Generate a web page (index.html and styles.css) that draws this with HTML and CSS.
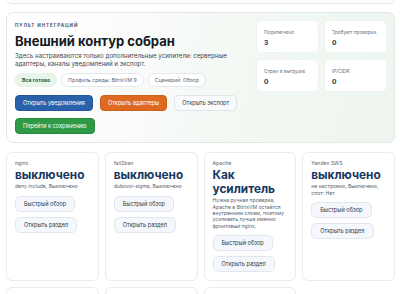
FILE: index.html
```html
<!DOCTYPE html>
<html lang="ru">
<head>
  <meta charset="UTF-8" />
  <meta name="viewport" content="width=device-width, initial-scale=1.0" />
  <title>Пульт интеграций</title>
  <link rel="stylesheet" href="styles.css">
</head>
<body>
  <div class="pagina">
    <div class="tarjeta-previa"></div>

    <section class="hero">
      <div class="hero-principal">
        <div class="eyebrow">Пульт интеграций</div>
        <h1>Внешний контур собран</h1>
        <p class="descripcion">Здесь настраиваются только дополнительные усилители: серверные адаптеры, каналы уведомлений и экспорт.</p>
        <div class="chips">
          <span class="chip chip-ok">Все готово</span>
          <span class="chip">Профиль среды: BitrixVM 9</span>
          <span class="chip">Сценарий: Обзор</span>
        </div>
        <div class="acciones">
          <button class="btn btn-azul">Открыть уведомления</button>
          <button class="btn btn-naranja">Открыть адаптеры</button>
          <button class="btn btn-claro">Открыть экспорт</button>
          <button class="btn btn-verde">Перейти к сохранению</button>
        </div>
      </div>
      <div class="stats">
        <div class="stat"><span>Подключено</span><strong>3</strong></div>
        <div class="stat"><span>Требуют проверки</span><strong>0</strong></div>
        <div class="stat"><span>Стран в выгрузке</span><strong>0</strong></div>
        <div class="stat"><span>IP/CIDR</span><strong>0</strong></div>
      </div>
    </section>

    <section class="adaptadores">
      <div class="adaptador">
        <div class="nombre">nginx</div>
        <div class="estado">выключено</div>
        <div class="detalle">deny include, Выключено</div>
        <button class="btn-sec">Быстрый обзор</button>
        <button class="btn-sec">Открыть раздел</button>
      </div>
      <div class="adaptador">
        <div class="nombre">fail2ban</div>
        <div class="estado">выключено</div>
        <div class="detalle">dubovoi-sigma, Выключено</div>
        <button class="btn-sec">Быстрый обзор</button>
        <button class="btn-sec">Открыть раздел</button>
      </div>
      <div class="adaptador">
        <div class="nombre">Apache</div>
        <div class="estado">Как усилитель</div>
        <div class="detalle">Нужна ручная проверка, Apache в BitrixVM остаётся внутренним слоем, поэтому усиливать лучше именно фронтовый nginx.</div>
        <button class="btn-sec">Быстрый обзор</button>
        <button class="btn-sec">Открыть раздел</button>
      </div>
      <div class="adaptador">
        <div class="nombre">Yandex SWS</div>
        <div class="estado">выключено</div>
        <div class="detalle">не настроено, Выключено, спот: Нет</div>
        <button class="btn-sec">Быстрый обзор</button>
        <button class="btn-sec">Открыть раздел</button>
      </div>
      <div class="adaptador"></div>
      <div class="adaptador"></div>
      <div class="adaptador"></div>
    </section>
  </div>
</body>
</html>
```

FILE: styles.css
```css
body {
  margin: 0;
  padding: 0;
  background: #ffffff;
  font-family: Inter, "Noto Sans", Arial, sans-serif;
  color: #1c2430;
  overflow: hidden;
}

.pagina {
  display: flex;
  flex-direction: column;
  gap: 8px;
  padding: 0 8px 0 6px;
}

.tarjeta-previa {
  height: 20px;
  margin-top: -18px;
  border: 1px solid #e6e9ee;
  border-radius: 6px;
  background: #fff;
}

.hero {
  display: grid;
  grid-template-columns: 1fr 131px;
  gap: 6px;
  padding: 8px 7px 8px 8px;
  border: 1px solid #e3e8e4;
  border-radius: 7px;
  background: linear-gradient(100deg, #ffffff 10%, #f3f8f3 60%, #eef6ef 100%);
}

.eyebrow {
  font-size: 4.6px;
  font-weight: 700;
  letter-spacing: 0.9px;
  text-transform: uppercase;
  color: #4a5564;
  margin-top: 2px;
}

.hero h1 {
  margin: 5px 0 0;
  font-size: 13px;
  line-height: 16px;
  font-weight: 700;
  color: #141a22;
}

.descripcion {
  margin: 3px 0 0;
  font-size: 6.2px;
  line-height: 7.6px;
  color: #3d4754;
  max-width: 236px;
}

.chips {
  display: flex;
  gap: 4px;
  margin-top: 6px;
}

.chip {
  display: inline-flex;
  align-items: center;
  height: 12px;
  padding: 0 6px;
  border: 1px solid #e4e8ee;
  border-radius: 8px;
  background: #fff;
  font-size: 5.2px;
  color: #5b6573;
}

.chip-ok {
  border-color: #e3f2e6;
  background: #e7f5ea;
  color: #24603a;
  font-weight: 700;
}

.acciones {
  display: flex;
  flex-wrap: wrap;
  gap: 7px 7px;
  margin-top: 8px;
  max-width: 236px;
}

.btn {
  height: 16px;
  padding: 0 7px;
  border-radius: 4px;
  border: 1px solid transparent;
  font-family: inherit;
  font-size: 5.6px;
  color: #fff;
  cursor: pointer;
}

.btn-azul {
  background: #2a61ab;
  border-color: #245699;
}

.btn-naranja {
  background: #de6a22;
  border-color: #cc5f1c;
}

.btn-claro {
  background: #f8fafc;
  border-color: #dfe5ec;
  color: #2f3a48;
}

.btn-verde {
  background: #2e9a46;
  border-color: #27893d;
}

.stats {
  display: grid;
  grid-template-columns: 1fr 1fr;
  grid-template-rows: 33px 33px;
  gap: 6px 5px;
  margin-top: -1px;
}

.stat {
  display: flex;
  flex-direction: column;
  gap: 4px;
  padding: 8px 7px;
  border-radius: 5px;
  background: #fff;
  border: 1px solid #f0f3f1;
}

.stat span {
  font-size: 4.8px;
  color: #66707c;
}

.stat strong {
  font-size: 6.6px;
  color: #17324f;
}

.adaptadores {
  display: grid;
  grid-template-columns: repeat(4, 1fr);
  gap: 6px;
  margin-top: 1px;
}

.adaptador {
  display: flex;
  flex-direction: column;
  align-items: flex-start;
  min-height: 114px;
  padding: 7px 7px 6px 8px;
  border: 1px solid #e8ebef;
  border-radius: 6px;
  background: #fff;
}

.nombre {
  font-size: 5.2px;
  color: #5c6672;
}

.estado {
  margin-top: 2px;
  font-size: 11.8px;
  line-height: 14px;
  font-weight: 700;
  color: #163861;
}

.detalle {
  margin-top: 1px;
  font-size: 5.1px;
  line-height: 6.4px;
  color: #5a6470;
}

.btn-sec {
  height: 16px;
  margin-top: 6px;
  padding: 0 8px;
  border: 1px solid #e2e7ee;
  border-radius: 5px;
  background: #f4f7fb;
  font-family: inherit;
  font-size: 5.6px;
  color: #2f3b4a;
  cursor: pointer;
}

.btn-sec + .btn-sec {
  margin-top: 5px;
}
```
